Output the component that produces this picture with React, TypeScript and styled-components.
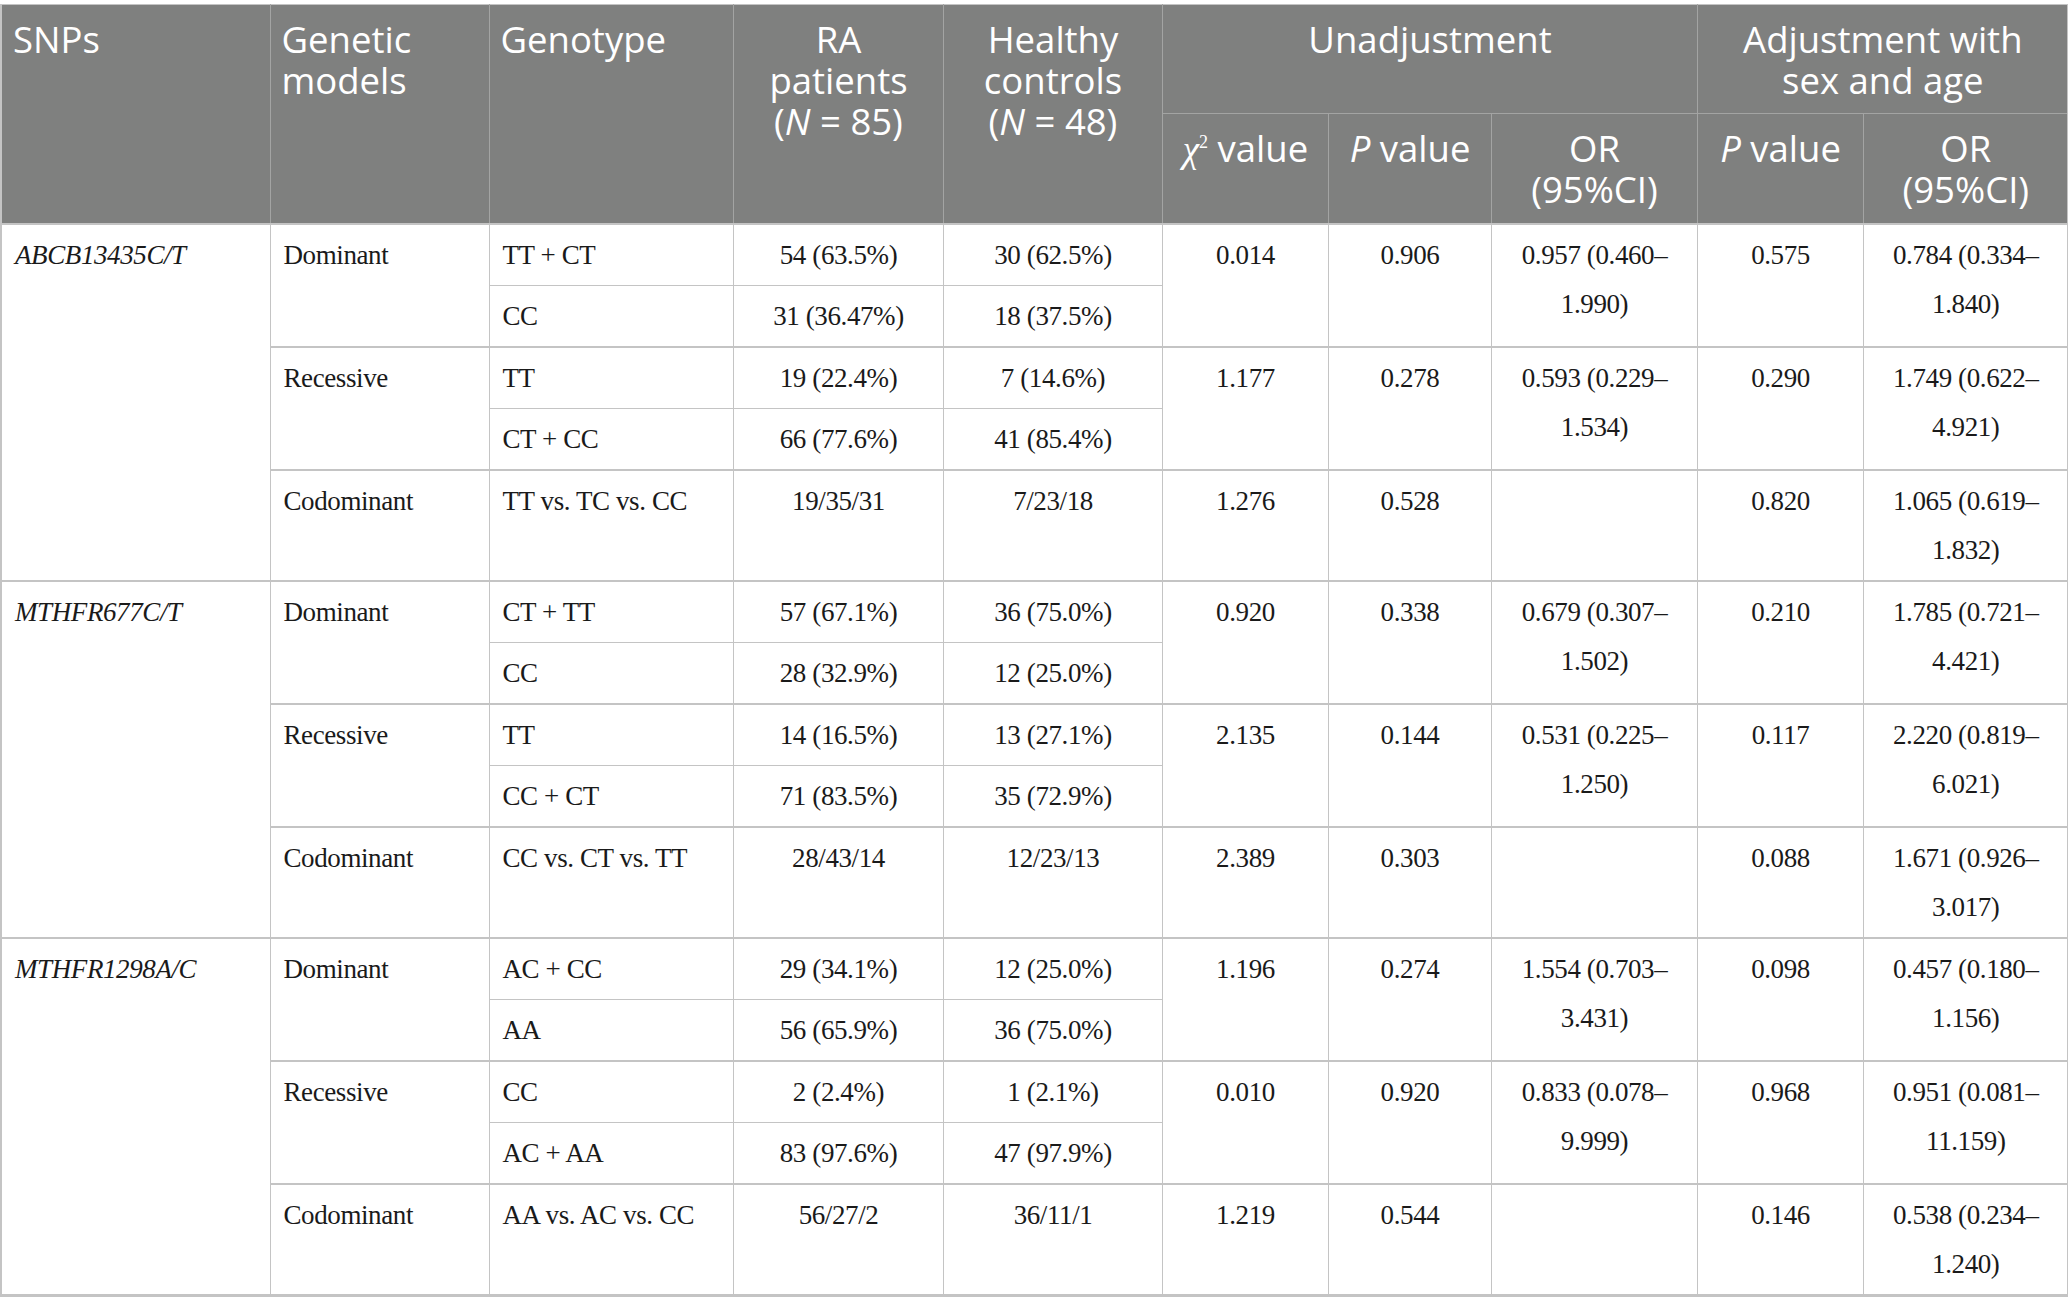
import React from "react";
import styled, { createGlobalStyle } from "styled-components";

const GlobalStyle = createGlobalStyle`
  html, body {
    margin: 0;
    padding: 0;
    background: #ffffff;
  }
  body {
    padding-top: 4px;
  }
`;

type ModelRow = {
  name: string;
  rows: string[][];
  chi: string;
  p: string;
  or: string[];
  padj: string;
  oradj: string[];
};

type Group = { snp: string; models: ModelRow[] };

const groups: Group[] = [
  {
    snp: "ABCB13435C/T",
    models: [
      { name: "Dominant", rows: [["TT + CT", "54 (63.5%)", "30 (62.5%)"], ["CC", "31 (36.47%)", "18 (37.5%)"]], chi: "0.014", p: "0.906", or: ["0.957 (0.460–", "1.990)"], padj: "0.575", oradj: ["0.784 (0.334–", "1.840)"] },
      { name: "Recessive", rows: [["TT", "19 (22.4%)", "7 (14.6%)"], ["CT + CC", "66 (77.6%)", "41 (85.4%)"]], chi: "1.177", p: "0.278", or: ["0.593 (0.229–", "1.534)"], padj: "0.290", oradj: ["1.749 (0.622–", "4.921)"] },
      { name: "Codominant", rows: [["TT vs. TC vs. CC", "19/35/31", "7/23/18"]], chi: "1.276", p: "0.528", or: [], padj: "0.820", oradj: ["1.065 (0.619–", "1.832)"] },
    ],
  },
  {
    snp: "MTHFR677C/T",
    models: [
      { name: "Dominant", rows: [["CT + TT", "57 (67.1%)", "36 (75.0%)"], ["CC", "28 (32.9%)", "12 (25.0%)"]], chi: "0.920", p: "0.338", or: ["0.679 (0.307–", "1.502)"], padj: "0.210", oradj: ["1.785 (0.721–", "4.421)"] },
      { name: "Recessive", rows: [["TT", "14 (16.5%)", "13 (27.1%)"], ["CC + CT", "71 (83.5%)", "35 (72.9%)"]], chi: "2.135", p: "0.144", or: ["0.531 (0.225–", "1.250)"], padj: "0.117", oradj: ["2.220 (0.819–", "6.021)"] },
      { name: "Codominant", rows: [["CC vs. CT vs. TT", "28/43/14", "12/23/13"]], chi: "2.389", p: "0.303", or: [], padj: "0.088", oradj: ["1.671 (0.926–", "3.017)"] },
    ],
  },
  {
    snp: "MTHFR1298A/C",
    models: [
      { name: "Dominant", rows: [["AC + CC", "29 (34.1%)", "12 (25.0%)"], ["AA", "56 (65.9%)", "36 (75.0%)"]], chi: "1.196", p: "0.274", or: ["1.554 (0.703–", "3.431)"], padj: "0.098", oradj: ["0.457 (0.180–", "1.156)"] },
      { name: "Recessive", rows: [["CC", "2 (2.4%)", "1 (2.1%)"], ["AC + AA", "83 (97.6%)", "47 (97.9%)"]], chi: "0.010", p: "0.920", or: ["0.833 (0.078–", "9.999)"], padj: "0.968", oradj: ["0.951 (0.081–", "11.159)"] },
      { name: "Codominant", rows: [["AA vs. AC vs. CC", "56/27/2", "36/11/1"]], chi: "1.219", p: "0.544", or: [], padj: "0.146", oradj: ["0.538 (0.234–", "1.240)"] },
    ],
  },
];

const widths = [269, 219, 244, 210, 219, 166, 163, 206, 166, 205];

const Table = styled.table`
  width: 2067px;
  table-layout: fixed;
  border-collapse: collapse;
  border-top: 1px solid #c4c4c4;
  border-left: 2px solid #c4c4c4;
  border-right: 2px solid #c4c4c4;
  border-bottom: 3px solid #c4c4c4;
`;

const HeadRow = styled.tr<{ $h: number }>`
  height: ${(p) => p.$h}px;
`;

const HeadCell = styled.th<{ $align?: string }>`
  background: #7f807f;
  color: #ffffff;
  font-family: "Open Sans", "Noto Sans", sans-serif;
  font-weight: 400;
  font-size: 36.5px;
  line-height: 41px;
  text-align: ${(p) => p.$align || "center"};
  vertical-align: top;
  padding: 14px 10px 0 11px;
  border: 1px solid #a3a4a3;
  border-top: none;
`;

const BodyRow = styled.tr`
  height: 60px;
`;

const Cell = styled.td<{ $align?: string; $thick?: boolean }>`
  font-family: "Liberation Serif", "Times New Roman", serif;
  font-size: 27px;
  line-height: 49px;
  color: #1a1a1a;
  letter-spacing: -0.4px;
  text-align: ${(p) => p.$align || "center"};
  vertical-align: top;
  padding: 6px 12px 5px 13px;
  border-left: 1px solid #c4c4c4;
  border-right: 1px solid #c4c4c4;
  border-top: ${(p) => (p.$thick ? "2px" : "1px")} solid #c4c4c4;
`;

const Italic = styled.i`
  font-style: italic;
`;

const Chi = styled.i`
  font-family: "Liberation Serif", serif;
  font-style: italic;
  font-size: 37px;
  sup {
    font-size: 18px;
    font-style: normal;
    vertical-align: 14px;
    line-height: 0;
  }
`;

const Lines = ({ parts }: { parts: string[] }) => (
  <>
    {parts.map((t, i) => (
      <React.Fragment key={i}>
        {i > 0 && <br />}
        {t}
      </React.Fragment>
    ))}
  </>
);

export default function App() {
  return (
    <>
      <GlobalStyle />
      <Table>
        <colgroup>
          {widths.map((w, i) => (
            <col key={i} style={{ width: w }} />
          ))}
        </colgroup>
        <thead>
          <HeadRow $h={109}>
            <HeadCell rowSpan={2} $align="left">SNPs</HeadCell>
            <HeadCell rowSpan={2} $align="left">Genetic<br />models</HeadCell>
            <HeadCell rowSpan={2} $align="left">Genotype</HeadCell>
            <HeadCell rowSpan={2}>RA<br />patients<br />(<Italic>N</Italic> = 85)</HeadCell>
            <HeadCell rowSpan={2}>Healthy<br />controls<br />(<Italic>N</Italic> = 48)</HeadCell>
            <HeadCell colSpan={3}>Unadjustment</HeadCell>
            <HeadCell colSpan={2}>Adjustment with<br />sex and age</HeadCell>
          </HeadRow>
          <HeadRow $h={110}>
            <HeadCell><Chi>χ<sup>2</sup></Chi> value</HeadCell>
            <HeadCell><Italic>P</Italic> value</HeadCell>
            <HeadCell>OR<br />(95%CI)</HeadCell>
            <HeadCell><Italic>P</Italic> value</HeadCell>
            <HeadCell>OR<br />(95%CI)</HeadCell>
          </HeadRow>
        </thead>
        <tbody>
          {groups.map((g) => {
            const total = g.models.reduce((n, m) => n + m.rows.length, 0);
            return g.models.map((m, mi) =>
              m.rows.map((r, ri) => {
                const first = ri === 0;
                return (
                  <BodyRow key={`${g.snp}-${mi}-${ri}`}>
                    {mi === 0 && first && (
                      <Cell rowSpan={total} $align="left" $thick>
                        <Italic>{g.snp}</Italic>
                      </Cell>
                    )}
                    {first && (
                      <Cell rowSpan={m.rows.length} $align="left" $thick>
                        {m.name}
                      </Cell>
                    )}
                    <Cell $align="left" $thick={first}>{r[0]}</Cell>
                    <Cell $thick={first}>{r[1]}</Cell>
                    <Cell $thick={first}>{r[2]}</Cell>
                    {first && (
                      <>
                        <Cell rowSpan={m.rows.length} $thick>{m.chi}</Cell>
                        <Cell rowSpan={m.rows.length} $thick>{m.p}</Cell>
                        <Cell rowSpan={m.rows.length} $thick><Lines parts={m.or} /></Cell>
                        <Cell rowSpan={m.rows.length} $thick>{m.padj}</Cell>
                        <Cell rowSpan={m.rows.length} $thick><Lines parts={m.oradj} /></Cell>
                      </>
                    )}
                  </BodyRow>
                );
              })
            );
          })}
        </tbody>
      </Table>
    </>
  );
}
